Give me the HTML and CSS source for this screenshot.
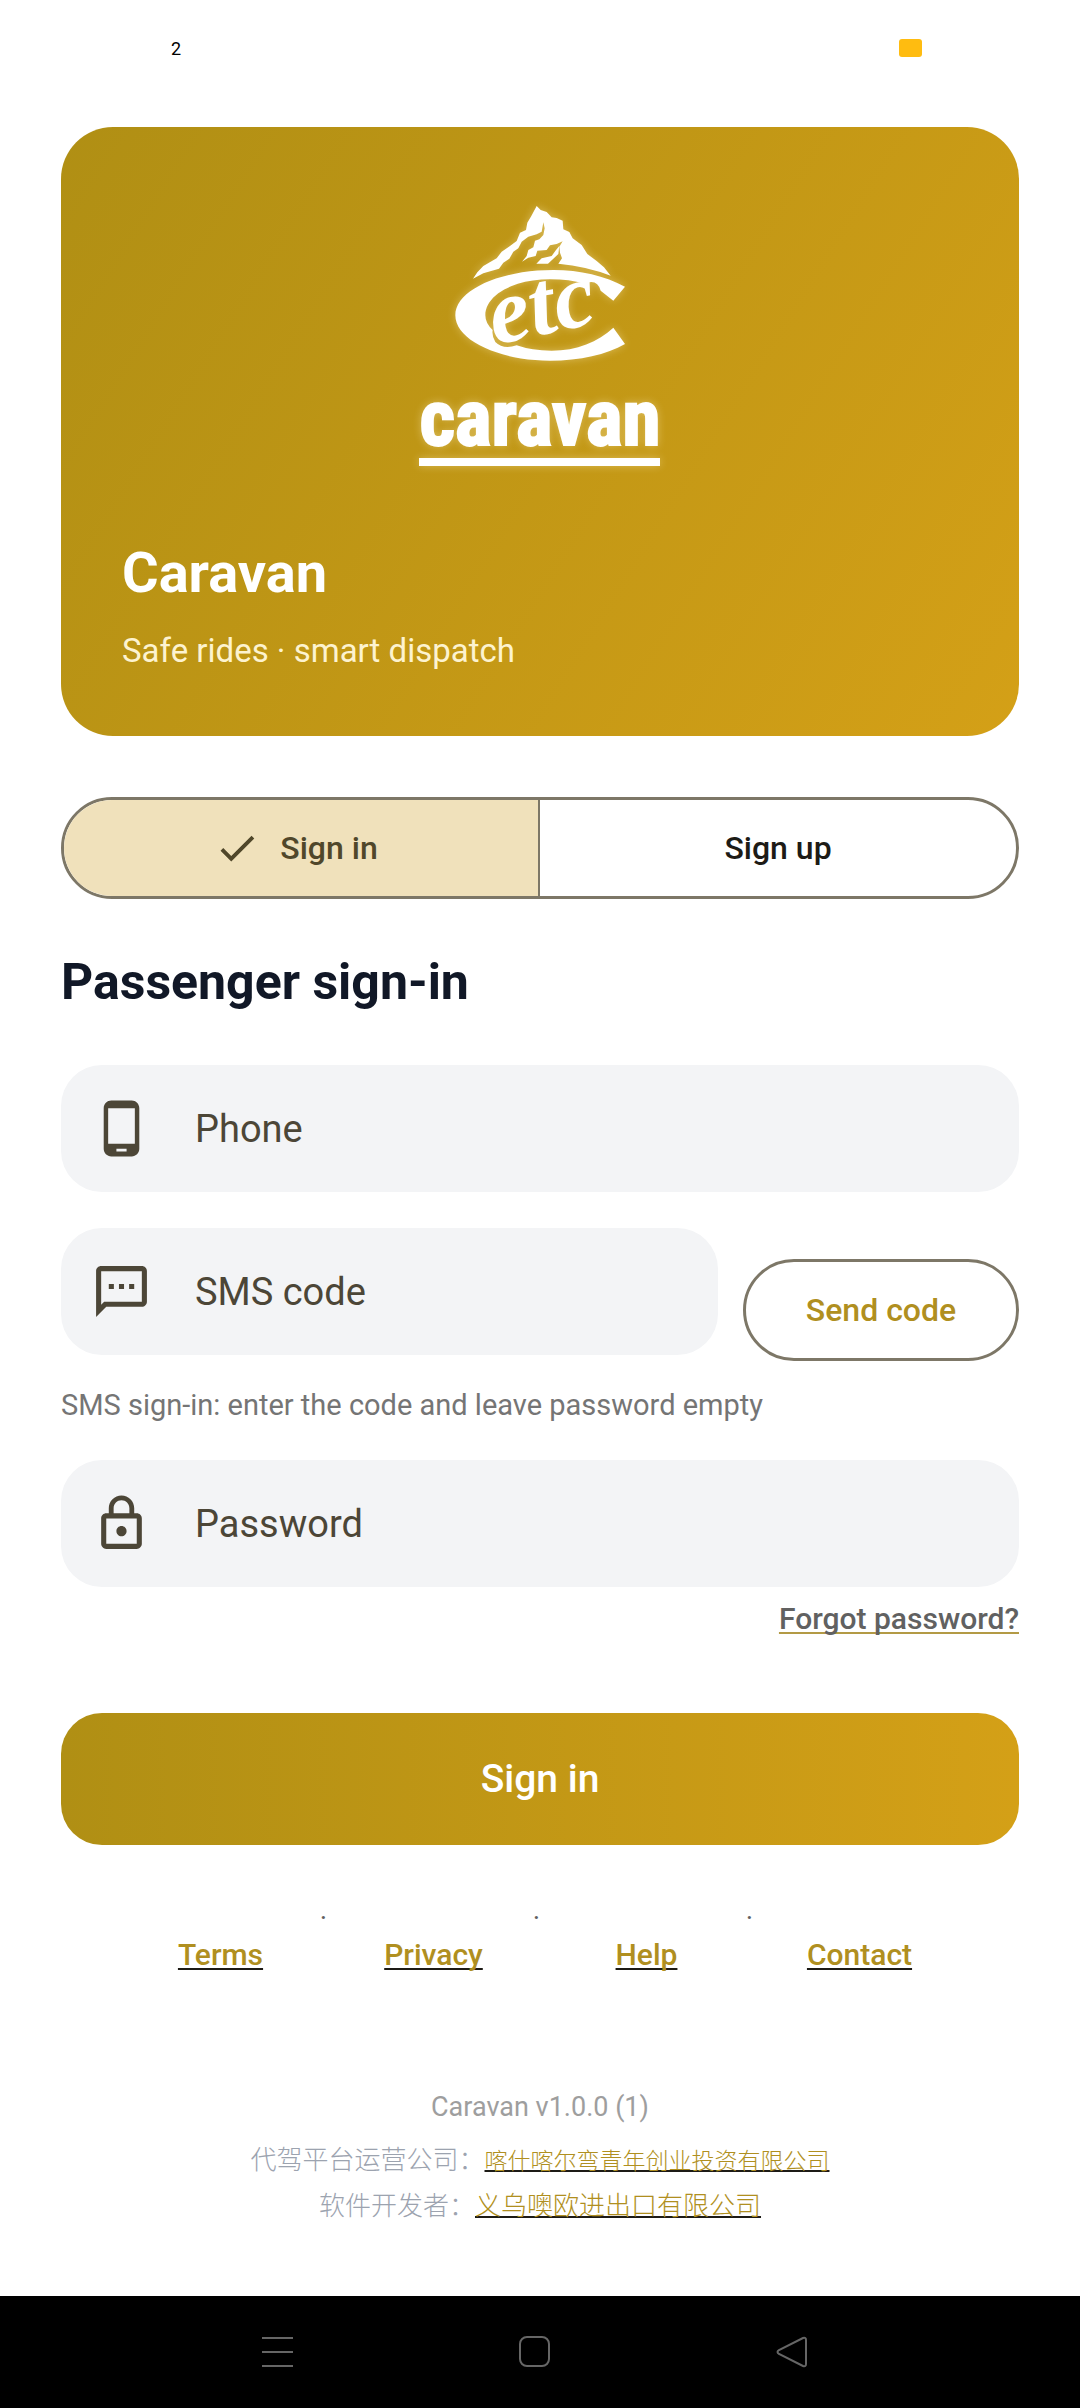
FILE: index.html
```html
<!DOCTYPE html>
<html lang="en">
<head>
<meta charset="utf-8">
<meta name="viewport" content="width=device-width, initial-scale=1">
<title>Caravan</title>
<link rel="stylesheet" href="styles.css">
</head>
<body>
<header class="status">
  <span>2</span>
  <span class="battery"></span>
</header>
<main class="content">
  <section class="hero">
    <svg class="logo" viewBox="0 0 840 900" role="img" aria-label="Caravan ETC">
      <path d="M410 48L422 60 440 66 455 82 470 84 488 92 490 118 508 126 518 145 545 165 562 192 590 213 612 232 632 257Q560 229 475 221L486 205 480 188 478 170 488 154 470 162 450 166 440 180 412 182 407 198 385 203 366 215 380 198 385 180 400 172 405 152 418 148 430 135 434 115 430 97 425 125 410 133 385 140 365 155 355 175 340 185 328 206 310 218 297 236 250 250 219 266 232 247 250 228 290 205 305 185 330 168 350 153 360 128 378 120 382 98 394 78Z"/>
      <path d="M409 221L425 205 455 198 468 180 478 168 475 192 460 206 444 221Z"/>
      <path d="M675 290C615 258 540 240 460 240C300 240 166 300 166 376C166 452 300 512 450 512C540 512 620 494 675 462L640 413C595 455 530 482 455 482Q395 482 350 466Q310 480 286 456Q275 438 278 420Q256 400 256 376C256 315 340 268 450 268Q510 268 552 281Q592 264 602 302L640 332Z"/>
      <text class="logo-etc" x="284" y="464" transform="rotate(-12 284 464)">etc</text>
      <text class="logo-name" x="420" y="766" text-anchor="middle">caravan</text>
      <path d="M57 804H780V828H57Z"/>
    </svg>
    <h1>Caravan</h1>
    <p>Safe rides · smart dispatch</p>
  </section>

  <div class="segments" role="group" aria-label="Mode">
    <button type="button" class="segment selected" aria-pressed="true">
      <svg class="check" viewBox="0 0 24 24" aria-hidden="true"><path d="M9 16.17L4.83 12l-1.42 1.41L9 19 21 7l-1.41-1.41z"/></svg>
      Sign in
    </button>
    <button type="button" class="segment" aria-pressed="false">Sign up</button>
  </div>

  <form class="form">
    <h2>Passenger sign-in</h2>
    <label class="field">
      <svg viewBox="0 0 24 24" aria-hidden="true"><path d="M16 1H8C6.34 1 5 2.34 5 4v16c0 1.66 1.34 3 3 3h8c1.66 0 3-1.34 3-3V4c0-1.66-1.34-3-3-3zm-2 20h-4v-1h4v1zm3.25-3H6.75V4h10.5v14z"/></svg>
      <input type="tel" placeholder="Phone" aria-label="Phone">
    </label>
    <div class="code-row">
      <label class="field">
        <svg viewBox="0 0 24 24" aria-hidden="true"><path d="M20 2H4c-1.1 0-2 .9-2 2v18l4-4h14c1.1 0 2-.9 2-2V4c0-1.1-.9-2-2-2zm0 14H5.17L4 17.17V4h16v12zM7 9h2v2H7zm4 0h2v2h-2zm4 0h2v2h-2z"/></svg>
        <input type="text" placeholder="SMS code" aria-label="SMS code">
      </label>
      <button type="button" class="send">Send code</button>
    </div>
    <p class="hint">SMS sign-in: enter the code and leave password empty</p>
    <label class="field">
      <svg viewBox="0 0 24 24" aria-hidden="true"><path d="M12 17c1.1 0 2-.9 2-2s-.9-2-2-2-2 .9-2 2 .9 2 2 2zm6-9h-1V6c0-2.76-2.24-5-5-5S7 3.24 7 6v2H6c-1.1 0-2 .9-2 2v10c0 1.1.9 2 2 2h12c1.1 0 2-.9 2-2V10c0-1.1-.9-2-2-2zM8.9 6c0-1.71 1.39-3.1 3.1-3.1s3.1 1.39 3.1 3.1v2H8.9V6zM18 20H6V10h12v10z"/></svg>
      <input type="password" placeholder="Password" aria-label="Password">
    </label>
    <a class="forgot" href="#">Forgot password?</a>
    <button type="submit" class="submit">Sign in</button>
  </form>

  <nav class="links" aria-label="Information">
    <div class="link-cell"><span class="dot">·</span><a href="#">Terms</a></div>
    <div class="link-cell"><span class="dot">·</span><a href="#">Privacy</a></div>
    <div class="link-cell"><span class="dot">·</span><a href="#">Help</a></div>
    <div class="link-cell"><a href="#">Contact</a></div>
  </nav>

  <footer class="about">
    <p class="version">Caravan v1.0.0 (1)</p>
    <p class="company" lang="zh-CN">代驾平台运营公司：<a class="long-name" href="#">喀什喀尔弯青年创业投资有限公司</a></p>
    <p class="company" lang="zh-CN">软件开发者：<a href="#">义乌噢欧进出口有限公司</a></p>
  </footer>
</main>
<nav class="system-bar" aria-label="System">
  <button type="button" aria-label="Recent apps"><svg viewBox="0 0 32 32"><path d="M0 2H31M0 16H31M0 30H31"/></svg></button>
  <button type="button" aria-label="Home"><svg viewBox="0 0 32 32"><rect x="1" y="1" width="29" height="29" rx="7"/></svg></button>
  <button type="button" aria-label="Back"><svg viewBox="0 0 32 32"><path d="M27 2Q30 1 30 4V28Q30 31 27 30L3 18Q0 16 3 14Z"/></svg></button>
</nav>
</body>
</html>
```

FILE: styles.css
```css
:root {
  --gold-dark: #b08f14;
  --gold: #d4a017;
  --outline: #7d7767;
  --field: #f3f4f6;
  --ink: #4c4637;
}

* {
  box-sizing: border-box;
}

body {
  margin: 0;
  min-height: 100vh;
  display: flex;
  flex-direction: column;
  background: #fff;
  color: #111827;
  font-family: Roboto, "Noto Sans CJK SC", sans-serif;
}

h1, h2, p {
  margin: 0;
}

button {
  font: inherit;
  border: 0;
  background: none;
  padding: 0;
}

.status {
  display: flex;
  justify-content: space-between;
  align-items: center;
  height: 96px;
  padding: 0 158px 0 171px;
  font-size: 18px;
  color: #000;
}

.battery {
  width: 23px;
  height: 18px;
  border-radius: 3px;
  background: #ffbc10;
}

.content {
  padding: 31px 61px 0;
}

.hero {
  padding: 63px 61px 66px;
  border-radius: 52px;
  background: linear-gradient(122deg, var(--gold-dark), var(--gold));
  color: #fff;
}

.logo {
  display: block;
  width: 280px;
  height: 300px;
  margin: 0 auto 50px;
  fill: #fff;
  filter: drop-shadow(0 0 4px rgba(255, 240, 190, 0.4));
}

.logo-etc {
  font: italic bold 276px "Liberation Serif", serif;
}

.logo-name {
  font: bold 232px "Liberation Sans Narrow", "Roboto Condensed", "Open Sans Condensed", "DejaVu Sans Condensed", sans-serif;
  stroke: #fff;
  stroke-width: 6px;
}

.hero h1 {
  font-size: 56px;
  line-height: 66px;
  font-weight: 700;
}

.hero p {
  margin-top: 26px;
  font-size: 33px;
  line-height: 38px;
  color: #fdf3cf;
}

.segments {
  display: grid;
  grid-template-columns: 1fr 1fr;
  height: 102px;
  margin-top: 61px;
  border: 3px solid var(--outline);
  border-radius: 51px;
  overflow: hidden;
}

.segment {
  display: flex;
  align-items: center;
  justify-content: center;
  gap: 20px;
  font-size: 32px;
  font-weight: 500;
  color: #1d1b16;
}

.segment.selected {
  padding-right: 10px;
  border-right: 2px solid var(--outline);
  background: #f0e1bb;
  color: #50472a;
}

.check {
  width: 46px;
  height: 46px;
  fill: currentColor;
}

.form {
  display: flex;
  flex-direction: column;
}

.form h2 {
  margin: 53px 0;
  font-size: 50px;
  line-height: 60px;
  font-weight: 700;
}

.field {
  display: flex;
  align-items: center;
  gap: 43px;
  height: 127px;
  padding: 0 30px;
  border-radius: 41px;
  background: var(--field);
}

.field svg {
  flex: none;
  width: 61px;
  height: 61px;
  fill: var(--ink);
}

.field input {
  flex: 1;
  min-width: 0;
  border: 0;
  padding: 0;
  outline: 0;
  background: none;
  font: inherit;
  font-size: 38px;
  line-height: 44px;
  color: var(--ink);
}

.field input::placeholder {
  color: var(--ink);
  opacity: 1;
}

.code-row {
  display: flex;
  gap: 25px;
  height: 133px;
  margin-top: 36px;
}

.code-row .field {
  flex: 1;
}

.send {
  align-self: flex-end;
  width: 276px;
  height: 102px;
  border: 3px solid var(--outline);
  border-radius: 51px;
  font-size: 32px;
  font-weight: 500;
  color: #b08f20;
}

.hint {
  margin: 27px 0 38px;
  font-size: 29px;
  line-height: 34px;
  color: #757575;
}

.forgot {
  align-self: flex-end;
  margin-top: 14px;
  font-size: 30px;
  line-height: 36px;
  font-weight: 500;
  color: #616161;
  text-decoration: underline 2px #b39a45;
  text-decoration-skip-ink: none;
  text-underline-offset: 3px;
}

.submit {
  height: 132px;
  margin-top: 76px;
  border-radius: 41px;
  background: linear-gradient(90deg, var(--gold-dark), var(--gold));
  color: #fff;
  font-size: 39px;
  font-weight: 500;
}

.links {
  display: grid;
  grid-template-columns: repeat(4, 1fr);
  margin-top: 54px;
  padding: 0 53px;
}

.link-cell {
  display: flex;
  flex-direction: column;
  align-items: center;
  justify-content: flex-end;
}

.dot {
  align-self: flex-end;
  font-size: 28px;
  line-height: 38px;
  color: #616161;
}

.links a {
  font-size: 30px;
  line-height: 36px;
  font-weight: 500;
  color: #b08f20;
  text-decoration: underline 2px #1d1b16;
  text-decoration-skip-ink: none;
  text-underline-offset: 3px;
}

.about {
  display: flex;
  flex-direction: column;
  align-items: center;
  margin-top: 117px;
  text-align: center;
}

.version {
  margin-bottom: 14px;
  font-size: 27px;
  line-height: 34px;
  color: #9e9e9e;
}

.company {
  font-size: 26px;
  line-height: 45px;
  font-weight: 300;
  color: #9ca3af;
}

.company a {
  color: #b08f20;
  text-decoration: underline 2px #1d1b16;
  text-decoration-skip-ink: none;
  text-underline-offset: 1px;
}

.company .long-name {
  font-size: 23px;
}

.system-bar {
  display: grid;
  grid-template-columns: repeat(3, 257px);
  justify-content: center;
  height: 112px;
  margin-top: auto;
  padding-right: 10px;
  background: #000;
}

.system-bar button {
  display: grid;
  place-items: center;
}

.system-bar svg {
  width: 32px;
  height: 32px;
  fill: none;
  stroke: #666;
  stroke-width: 2px;
}
```
